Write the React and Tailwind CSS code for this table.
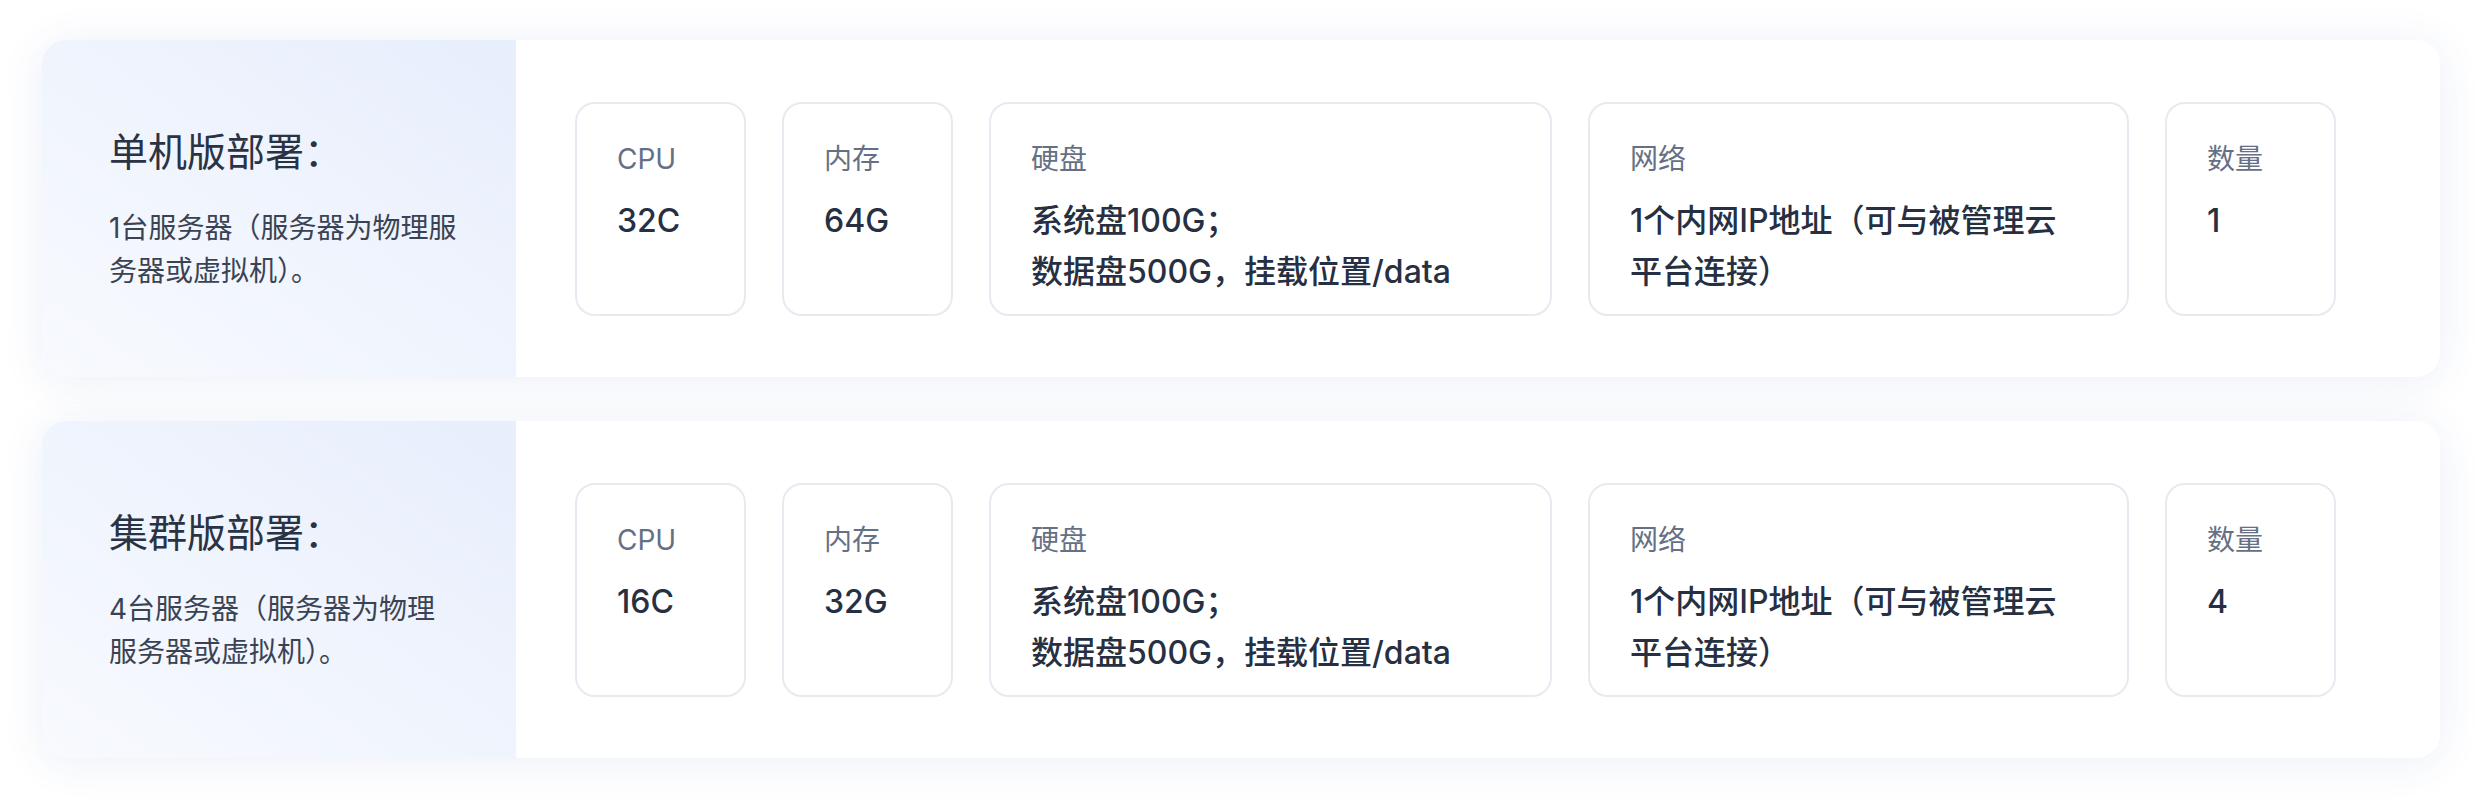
const plans = [
  {
    title: "单机版部署：",
    desc: ["1台服务器（服务器为物理服", "务器或虚拟机）。"],
    cpu: "32C",
    mem: "64G",
    qty: "1",
  },
  {
    title: "集群版部署：",
    desc: ["4台服务器（服务器为物理", "服务器或虚拟机）。"],
    cpu: "16C",
    mem: "32G",
    qty: "4",
  },
];

const disk = ["系统盘100G；", "数据盘500G，挂载位置/data"];
const network = ["1个内网IP地址（可与被管理云", "平台连接）"];

const SpecBox = ({ label, lines, width }) => {
  return (
    <div
      className={`${width} h-[214px] shrink-0 rounded-[20px] border-2 border-[#e7eaf0] bg-white pl-[40px] pt-[35px]`}
    >
      <div className="text-[28px] leading-[40px] text-[#667085]">{label}</div>
      <div className="mt-[16px] text-[32px] font-medium leading-[51px] text-[#263042]">
        {lines.map((line) => (
          <div key={line} className="whitespace-nowrap">
            {line}
          </div>
        ))}
      </div>
    </div>
  );
};

const PlanCard = ({ plan }) => {
  return (
    <div className="flex h-[337px] overflow-hidden rounded-[24px] bg-white shadow-[0_4px_44px_0_rgba(40,80,170,0.09)]">
      <div className="flex w-[474px] shrink-0 flex-col justify-center bg-linear-to-tr from-[#f8fafe] to-[#e7eefc] pl-[67px]">
        <h2 className="text-[39px] leading-[54px] text-[#2a3344]">
          {plan.title}
        </h2>
        <p className="mt-[28px] text-[28px] leading-[43px] text-[#3a4354]">
          {plan.desc.map((line) => (
            <span key={line} className="block whitespace-nowrap">
              {line}
            </span>
          ))}
        </p>
      </div>
      <div className="flex items-center gap-[36px] pl-[59px]">
        <SpecBox label="CPU" lines={[plan.cpu]} width="w-[171px]" />
        <SpecBox label="内存" lines={[plan.mem]} width="w-[171px]" />
        <SpecBox label="硬盘" lines={disk} width="w-[563px]" />
        <SpecBox label="网络" lines={network} width="w-[541px]" />
        <SpecBox label="数量" lines={[plan.qty]} width="w-[171px]" />
      </div>
    </div>
  );
};

export default function App() {
  return (
    <div className="min-h-[800px] bg-white px-[42px] pt-[40px] font-['Inter','Noto_Sans_CJK_SC',sans-serif]">
      <div className="flex flex-col gap-[44px]">
        {plans.map((plan) => (
          <PlanCard key={plan.title} plan={plan} />
        ))}
      </div>
    </div>
  );
}
